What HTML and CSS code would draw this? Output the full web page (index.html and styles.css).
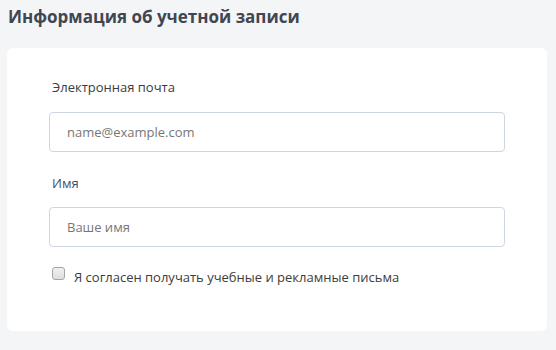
FILE: index.html
```html
<!DOCTYPE html>
<html lang="ru">

<head>
    <meta charset="UTF-8" />
    <meta name="viewport" content="width=device-width, initial-scale=1.0" />
    <title>Информация об учетной записи</title>
    <link rel="stylesheet" href="styles.css">
</head>

<body class="page">
    <h2 class="page-title">Информация об учетной записи</h2>
    <form class="card">
        <label class="field-label" for="email-inp">Электронная почта</label>
        <input type="email" class="field-inp" id="email-inp" placeholder="name@example.com" />
        <label class="field-label field-label-name" for="name-inp">Имя</label>
        <input type="text" class="field-inp" id="name-inp" placeholder="Ваше имя" />
        <label class="agree-row">
            <input type="checkbox" class="agree-box" />
            <span class="agree-text">Я согласен получать учебные и рекламные письма</span>
        </label>
    </form>
</body>

</html>
```

FILE: styles.css
```css
.page {
    margin: 0;
    padding: 5px 9px 0 7px;
    background-color: rgb(244, 245, 247);
    font-family: "Open Sans", "Liberation Sans", sans-serif;
}

.page-title {
    margin: 0 0 20px 1px;
    font-size: 17px;
    line-height: 23px;
    font-weight: 700;
    color: rgb(64, 70, 82);
}

.card {
    display: flex;
    flex-direction: column;
    align-items: flex-start;
    background-color: rgb(255, 255, 255);
    border-radius: 6px;
    padding: 30px 42px 45px 42px;
}

.field-label {
    margin-left: 3px;
    margin-bottom: 16px;
    font-size: 13px;
    line-height: 18px;
    color: rgb(60, 60, 60);
}

.field-label-name {
    margin-top: 22px;
    margin-bottom: 15px;
    color: rgb(60, 80, 110);
}

.field-inp {
    box-sizing: border-box;
    width: 456px;
    height: 40px;
    padding: 0 17px;
    border: 1px solid rgb(206, 214, 224);
    border-radius: 4px;
    font-family: inherit;
    font-size: 13px;
    color: rgb(60, 60, 60);
    background-color: rgb(255, 255, 255);
}

.field-inp::placeholder {
    color: rgb(118, 118, 118);
    opacity: 1;
}

.agree-row {
    display: flex;
    align-items: flex-start;
    margin-top: 20px;
    margin-left: 2px;
}

.agree-box {
    appearance: none;
    box-sizing: border-box;
    width: 13px;
    height: 13px;
    margin: 0 9px 0 1px;
    border: 1px solid rgb(165, 165, 165);
    border-radius: 3px;
    background: linear-gradient(rgb(240, 240, 240), rgb(222, 222, 222));
}

.agree-text {
    font-size: 13px;
    line-height: 18px;
    padding-top: 1px;
    color: rgb(60, 60, 60);
}
```
